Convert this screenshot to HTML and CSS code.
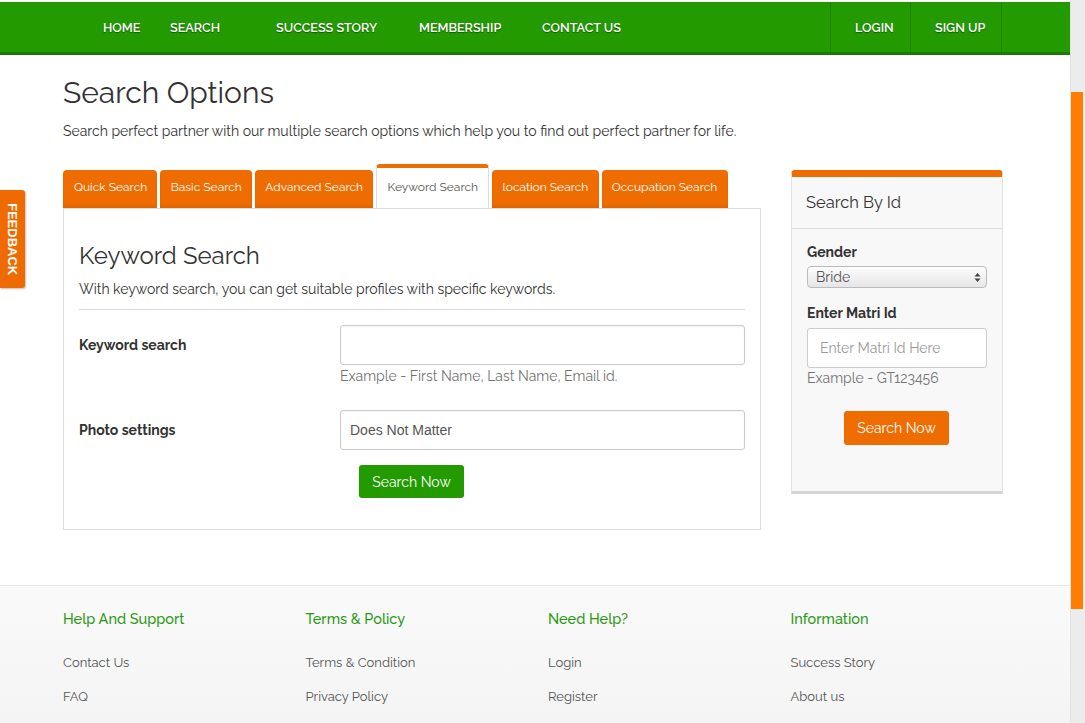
FILE: index.html
```html
<!DOCTYPE html>
<html>
<head>
<meta charset="utf-8">
<link rel="stylesheet" href="styles.css">
</head>
<body>
<div class="viewport">
  <div class="page">
    <nav class="topnav">
      <div class="nav-inner">
        <ul class="nav-left">
          <li class="n-home">HOME</li>
          <li class="n-search">SEARCH</li>
          <li class="n-story">SUCCESS STORY</li>
          <li class="n-member">MEMBERSHIP</li>
          <li class="n-contact">CONTACT US</li>
        </ul>
        <ul class="nav-right">
          <li class="n-login">LOGIN</li>
          <li class="n-signup">SIGN UP</li>
        </ul>
      </div>
    </nav>

    <div class="feedback"><span>FEEDBACK</span></div>

    <main class="container">
      <h1 class="title">Search Options</h1>
      <p class="lead">Search perfect partner with our multiple search options which help you to find out perfect partner for life.</p>

      <div class="content-row">
        <section class="tabs-col">
          <ul class="tabs">
            <li class="tab">Quick Search</li>
            <li class="tab">Basic Search</li>
            <li class="tab">Advanced Search</li>
            <li class="tab active">Keyword Search</li>
            <li class="tab">location Search</li>
            <li class="tab">Occupation Search</li>
          </ul>
          <div class="tab-panel">
            <h2 class="panel-title">Keyword Search</h2>
            <p class="panel-desc">With keyword search, you can get suitable profiles with specific keywords.</p>
            <hr class="rule">
            <div class="form-row">
              <label class="form-label">Keyword search</label>
              <div class="form-field">
                <div class="text-input"></div>
                <div class="help">Example - First Name, Last Name, Email id.</div>
              </div>
            </div>
            <div class="form-row row-photo">
              <label class="form-label">Photo settings</label>
              <div class="form-field">
                <div class="select-input">Does Not Matter</div>
              </div>
            </div>
            <div class="btn-row">
              <button class="btn btn-green">Search Now</button>
            </div>
          </div>
        </section>

        <aside class="side-col">
          <div class="side-box">
            <div class="side-head">Search By Id</div>
            <div class="side-body">
              <div class="side-label">Gender</div>
              <div class="mac-select">
                <span>Bride</span>
                <svg class="updown" width="7" height="11" viewBox="0 0 7 11"><path d="M3.5 1 L6.5 4.5 L0.5 4.5 Z M3.5 10 L0.5 6.5 L6.5 6.5 Z" fill="#444"/></svg>
              </div>
              <div class="side-label label-id">Enter Matri Id</div>
              <div class="id-input">Enter Matri Id Here</div>
              <div class="side-help">Example - GT123456</div>
              <div class="side-btn-row">
                <button class="btn btn-orange">Search Now</button>
              </div>
            </div>
          </div>
        </aside>
      </div>
    </main>

    <footer class="footer">
      <div class="footer-inner">
        <div class="f-col">
          <h4>Help And Support</h4>
          <ul><li>Contact Us</li><li>FAQ</li></ul>
        </div>
        <div class="f-col">
          <h4>Terms &amp; Policy</h4>
          <ul><li>Terms &amp; Condition</li><li>Privacy Policy</li></ul>
        </div>
        <div class="f-col">
          <h4>Need Help?</h4>
          <ul><li>Login</li><li>Register</li></ul>
        </div>
        <div class="f-col">
          <h4>Information</h4>
          <ul><li>Success Story</li><li>About us</li></ul>
        </div>
      </div>
    </footer>
  </div>

  <div class="scrollbar"><div class="thumb"></div></div>
</div>
</body>
</html>
```

FILE: styles.css
```css
* { box-sizing: border-box; }
html, body { margin: 0; padding: 0; }
body {
  font-family: "Raleway", Lato, "Open Sans", sans-serif;
  color: #333;
  background: #fff;
  overflow: hidden;
}
ul { list-style: none; margin: 0; padding: 0; }

.viewport {
  display: flex;
  width: 1085px;
  height: 723px;
  overflow: hidden;
}
.page {
  width: 1070px;
  flex: none;
  position: relative;
}
.scrollbar {
  width: 15px;
  flex: none;
  background: #ececec;
  border-left: 1px solid #e2e2e2;
  padding-top: 92px;
}
.thumb {
  width: 12px;
  height: 517px;
  background: #ff7d00;
}

/* NAV */
.topnav {
  margin-top: 2px;
  height: 53px;
  background: #229a00;
  border-bottom: 3px solid #1b7a00;
}
.nav-inner {
  display: flex;
  justify-content: space-between;
  height: 50px;
  padding-left: 103px;
  padding-right: 68px;
}
.nav-left, .nav-right { display: flex; height: 100%; }
.nav-left li, .nav-right li {
  color: #fff;
  font-size: 12.6px;
  font-weight: 600;
  line-height: 51px;
  text-shadow: 0 1px 1px rgba(0,0,0,0.45);
}
.nav-left .n-home { width: 67px; }
.nav-left .n-search { width: 106px; }
.nav-left .n-story { width: 143px; }
.nav-left .n-member { width: 123px; }
.nav-right li {
  border-left: 1px solid #1c8500;
  padding-left: 24px;
}
.nav-right .n-login { width: 80px; }
.nav-right .n-signup { width: 92px; border-right: 1px solid #1c8500; }

/* FEEDBACK */
.feedback {
  position: absolute;
  left: 0;
  top: 190px;
  width: 25px;
  height: 98px;
  background: #ef6a00;
  border-radius: 0 3px 3px 0;
  box-shadow: 1px 1px 2px rgba(0,0,0,0.25);
  display: flex;
  align-items: center;
  justify-content: center;
}
.feedback span {
  writing-mode: vertical-rl;
  color: #fff;
  font-weight: 700;
  font-size: 13px;
  font-family: "Liberation Sans", Arial, sans-serif;
}

/* MAIN */
.container {
  width: 940px;
  margin: 0 0 0 63px;
}
.title {
  font-size: 30px;
  font-weight: 400;
  margin: 20px 0 0;
  line-height: 36px;
  color: #333;
}
.lead {
  margin: 10px 0 0;
  font-size: 14px;
  line-height: 20px;
  color: #333;
}
.content-row {
  display: flex;
  justify-content: space-between;
  margin-top: 23px;
}
.tabs-col { width: 698px; }
.tabs {
  display: flex;
  align-items: flex-end;
  gap: 3px;
  height: 44px;
}
.tab {
  background: #ef6c00;
  color: #fff;
  font-size: 12px;
  height: 38px;
  line-height: 35px;
  padding: 0 10.25px;
  border-radius: 4px 4px 0 0;
  box-shadow: inset 0 -3px 3px rgba(0,0,0,0.06);
}
.tab:first-child { padding: 0 10.25px 0 11px; }
.tab.active {
  background: #fff;
  color: #555;
  height: 44px;
  line-height: 39px;
  border: 1px solid #ddd;
  border-top: 4px solid #ef6c00;
  border-bottom: none;
  box-shadow: none;
}
.tab-panel {
  border: 1px solid #ddd;
  padding: 30px 15px 30px 15px;
  height: 322px;
}
.panel-title {
  font-size: 24px;
  font-weight: 400;
  margin: 0;
  line-height: 34px;
}
.panel-desc {
  margin: 6px 0 0;
  font-size: 14px;
  line-height: 20px;
}
.rule {
  border: 0;
  border-top: 1px solid #ddd;
  margin: 10px 0 15px;
}
.form-row {
  display: flex;
  align-items: flex-start;
}
.form-label {
  width: 261px;
  font-size: 14px;
  font-weight: 700;
  line-height: 40px;
  color: #333;
}
.form-field { flex: 1; }
.text-input, .select-input {
  height: 40px;
  border: 1px solid #ccc;
  border-radius: 3px;
  box-shadow: inset 0 1px 2px rgba(0,0,0,0.05);
  background: #fff;
}
.select-input {
  font-family: "Liberation Sans", Arial, sans-serif;
  font-size: 14px;
  color: #555;
  line-height: 38px;
  padding-left: 9px;
}
.help {
  font-size: 14px;
  color: #737373;
  line-height: 20px;
  margin-top: 1px;
}
.row-photo { margin-top: 24px; }
.btn-row { margin-top: 15px; padding-left: 280px; }
.btn {
  border: 0;
  color: #fff;
  font-family: inherit;
  font-size: 14px;
  border-radius: 3px;
  height: 34px;
  padding: 0 13px;
  cursor: pointer;
}
.btn-green { background: #229a00; width: 105px; height: 33px; }
.btn-orange { background: #ef6c00; width: 105px; }

/* SIDEBAR */
.side-col { width: 212px; margin-right: 0; }
.side-box {
  margin-top: 6px;
  background: #f8f8f8;
  border: 1px solid #e2e2e2;
  border-top: 7px solid #ef6c00;
  border-bottom: 3px solid #d6d6d6;
  border-radius: 4px 4px 0 0;
  height: 324px;
}
.side-head {
  font-size: 16.5px;
  height: 52px;
  line-height: 50px;
  padding-left: 14px;
  border-bottom: 1px solid #ddd;
  color: #333;
}
.side-body { padding: 13px 14px 0 15px; }
.side-label {
  font-size: 14px;
  font-weight: 700;
  line-height: 20px;
}
.label-id { margin-top: 15px; }
.mac-select {
  margin-top: 4px;
  height: 22px;
  width: 180px;
  border: 1px solid #bbb;
  border-radius: 4px;
  background: linear-gradient(#fdfdfd, #e6e6e6);
  display: flex;
  align-items: center;
  justify-content: space-between;
  padding: 0 5px 0 8px;
  font-size: 14px;
  color: #555;
}
.id-input {
  margin-top: 5px;
  width: 180px;
  height: 40px;
  border: 1px solid #ccc;
  border-radius: 3px;
  background: #fff;
  font-size: 14px;
  color: #999;
  line-height: 38px;
  padding-left: 12px;
}
.side-help {
  font-size: 14px;
  color: #737373;
  line-height: 20px;
  margin-top: 0;
}
.side-btn-row {
  display: flex;
  justify-content: center;
  margin-top: 23px;
  padding-right: 2px;
}

/* FOOTER */
.footer {
  position: absolute;
  left: 0;
  right: 0;
  top: 585px;
  height: 140px;
  border-top: 1px solid #e6e6e6;
  background: linear-gradient(#fafafa, #f4f4f4);
}
.footer-inner {
  display: grid;
  grid-template-columns: repeat(4, 242.5px);
  padding-left: 63px;
  padding-top: 23px;
}
.f-col h4 {
  margin: 0;
  font-size: 14.5px;
  font-weight: 500;
  color: #2a9a12;
  line-height: 20px;
}
.f-col ul { margin-top: 24px; }
.f-col li {
  font-size: 13px;
  color: #555;
  line-height: 20px;
  margin-bottom: 14px;
}
```
